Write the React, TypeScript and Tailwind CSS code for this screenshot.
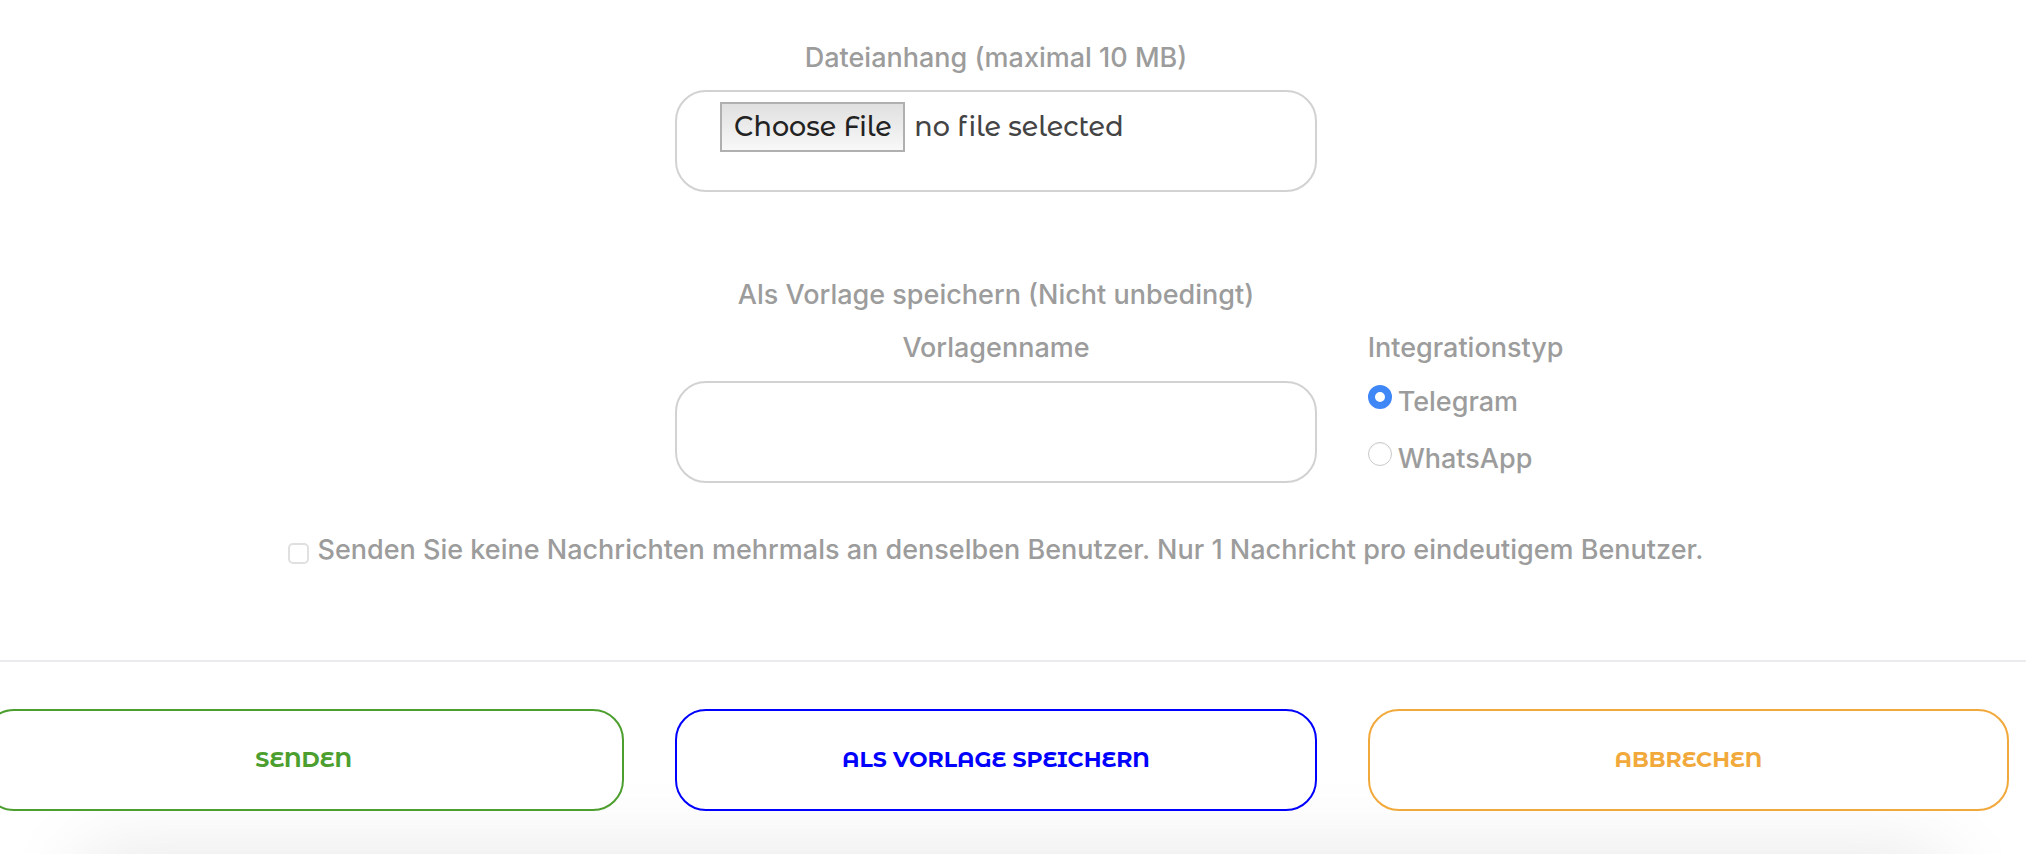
import { useRef, useState } from "react";
import type { ReactNode } from "react";
import clsx from "clsx";

const labelText = "text-[27px] leading-8 font-medium text-[#9c9c9c]";
const fieldBox =
  "h-[102px] w-full rounded-[31px] border-2 border-[#d2d2d2] bg-white px-[43px]";

interface RadioOptionProps {
  value: string;
  checked: boolean;
  onSelect: (value: string) => void;
}

const RadioOption = ({ value, checked, onSelect }: RadioOptionProps) => (
  <label className={clsx("flex items-start gap-1.5", labelText)}>
    <input
      type="radio"
      name="integration"
      value={value}
      checked={checked}
      onChange={() => onSelect(value)}
      className="-mt-px size-6 shrink-0 appearance-none rounded-full border border-[#cacaca] bg-white inset-shadow-xs checked:border-[7px] checked:border-[#3f86f7] checked:inset-shadow-none"
    />
    {value}
  </label>
);

interface ActionButtonProps {
  className: string;
  children: ReactNode;
}

const ActionButton = ({ className, children }: ActionButtonProps) => (
  <button
    type="button"
    className={clsx(
      "h-[102px] w-full rounded-[31px] border-2 bg-white pb-0.5 font-['Montserrat_Alternates',Inter,sans-serif] text-[22px] font-bold uppercase",
      className
    )}
  >
    {children}
  </button>
);

export default function App() {
  const fileRef = useRef<HTMLInputElement>(null);
  const [fileName, setFileName] = useState("no file selected");
  const [integration, setIntegration] = useState("Telegram");

  return (
    <div className="relative isolate overflow-hidden bg-white font-[Inter,sans-serif]">
      <form className="pt-[42px] pb-[43px]">
        <div className="mr-[17px] -ml-[17px] grid grid-cols-3 gap-x-[51px]">
          <div className="col-start-2 flex flex-col items-center">
            <label htmlFor="attachment" className={labelText}>
              Dateianhang (maximal 10 MB)
            </label>
            <div
              className={clsx(
                fieldBox,
                "mt-4 flex items-start gap-[9px] pt-2.5 font-['Montserrat_Alternates',Inter,sans-serif] text-[27px] font-medium"
              )}
            >
              <input
                ref={fileRef}
                id="attachment"
                type="file"
                className="sr-only"
                onChange={(e) =>
                  setFileName(e.target.files?.[0]?.name ?? "no file selected")
                }
              />
              <button
                type="button"
                onClick={() => fileRef.current?.click()}
                className="h-[50px] w-[185px] shrink-0 border-2 border-[#b0b0b0] bg-linear-to-b from-[#e0e0e0] to-[#f8f8f8] text-[#222]"
              >
                Choose File
              </button>
              <span className="truncate leading-[50px] text-[#444]">
                {fileName}
              </span>
            </div>
          </div>

          <h2 className={clsx("col-start-2 mt-[87px] text-center", labelText)}>
            Als Vorlage speichern (Nicht unbedingt)
          </h2>

          <div className="col-start-2 mt-[21px] flex flex-col items-center">
            <label htmlFor="template-name" className={labelText}>
              Vorlagenname
            </label>
            <input
              id="template-name"
              type="text"
              className={clsx(fieldBox, "mt-[17px] text-[27px]")}
            />
          </div>

          <fieldset className="mt-[21px]">
            <legend className={labelText}>Integrationstyp</legend>
            <div className="mt-[22px] flex flex-col gap-[25px]">
              {["Telegram", "WhatsApp"].map((value) => (
                <RadioOption
                  key={value}
                  value={value}
                  checked={integration === value}
                  onSelect={setIntegration}
                />
              ))}
            </div>
          </fieldset>

          <label
            className={clsx(
              "col-span-3 mt-[51px] flex items-start justify-center gap-2",
              labelText
            )}
          >
            <input
              type="checkbox"
              className="mt-[9px] size-[21px] shrink-0 appearance-none rounded-[5px] border-2 border-[#e0e0e0] bg-white checked:bg-[#3f86f7]"
            />
            Senden Sie keine Nachrichten mehrmals an denselben Benutzer. Nur 1
            Nachricht pro eindeutigem Benutzer.
          </label>
        </div>

        <hr className="mt-[94px] border-t-2 border-[#e9ebef]" />

        <div className="mt-[47px] mr-[17px] -ml-[17px] grid grid-cols-3 gap-x-[51px]">
          <ActionButton className="border-[#4c9f2f] text-[#4c9f2f]">
            Senden
          </ActionButton>
          <ActionButton className="border-[#0000fe] text-[#0000fe]">
            Als Vorlage speichern
          </ActionButton>
          <ActionButton className="border-[#f2a93b] text-[#f2a93b]">
            Abbrechen
          </ActionButton>
        </div>
      </form>

      {/* soft shadow rising from the lower edge */}
      <div className="absolute inset-x-20 top-full -z-10 h-20 shadow-[0_0_80px_rgba(0,0,0,0.1)]" />
    </div>
  );
}
